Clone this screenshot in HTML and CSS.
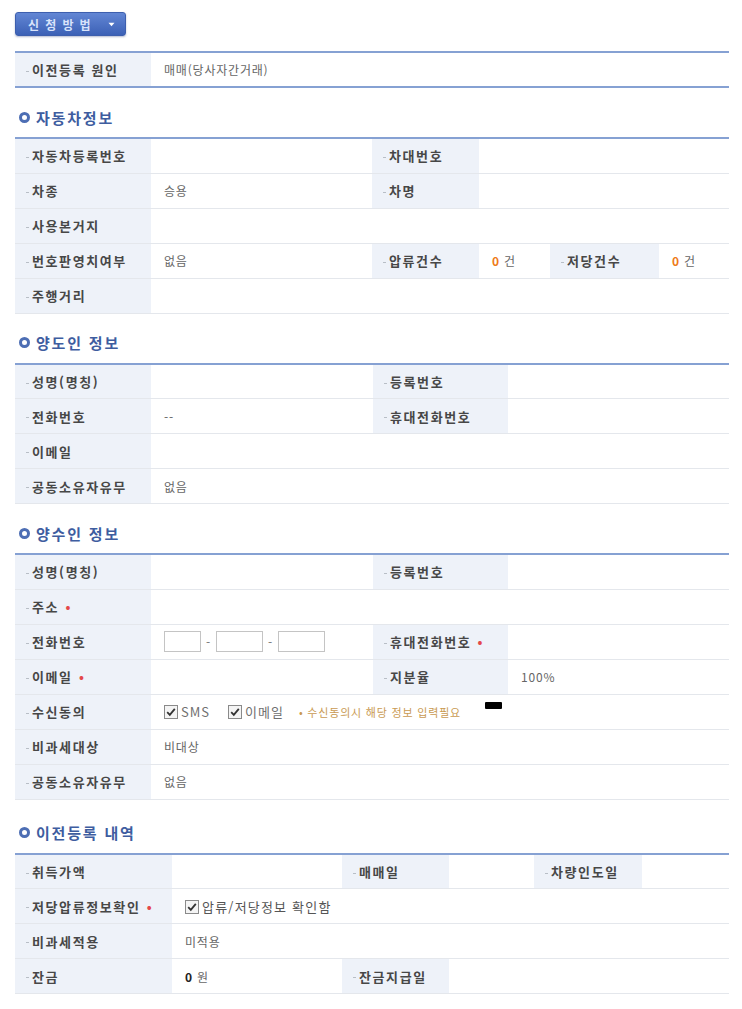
FILE: index.html
```html
<!DOCTYPE html>
<html lang="ko">
<head>
<meta charset="utf-8">
<link rel="stylesheet" href="styles.css">
</head>
<body>
<div class="page">
  <div class="topbar">
    <button class="btn-method"><span class="btn-text">신 청 방 법</span><svg class="btn-arrow" width="7" height="5" viewBox="0 0 7 5"><path d="M0.5 0.8 L3.5 4.2 L6.5 0.8 Z" fill="#ffffff"/></svg></button>
  </div>

  <table class="grid grid-cause">
    <colgroup><col class="w136"><col></colgroup>
    <tr><th>이전등록 원인</th><td>매매(당사자간거래)</td></tr>
  </table>

  <h2 class="sec-title"><span class="bullet"></span>자동차정보</h2>
  <table class="grid">
    <colgroup><col style="width:136px"><col style="width:221px"><col style="width:107px"><col style="width:71px"><col style="width:109px"><col style="width:70px"></colgroup>
    <tr><th>자동차등록번호</th><td></td><th>차대번호</th><td colspan="3"></td></tr>
    <tr><th>차종</th><td>승용</td><th>차명</th><td colspan="3"></td></tr>
    <tr><th>사용본거지</th><td colspan="5"></td></tr>
    <tr><th>번호판영치여부</th><td>없음</td><th>압류건수</th><td><b class="num">0</b> 건</td><th>저당건수</th><td><b class="num">0</b> 건</td></tr>
    <tr><th>주행거리</th><td colspan="5"></td></tr>
  </table>

  <h2 class="sec-title"><span class="bullet"></span>양도인 정보</h2>
  <table class="grid">
    <colgroup><col style="width:136px"><col style="width:222px"><col style="width:135px"><col style="width:221px"></colgroup>
    <tr><th>성명(명칭)</th><td></td><th>등록번호</th><td></td></tr>
    <tr><th>전화번호</th><td>--</td><th>휴대전화번호</th><td></td></tr>
    <tr><th>이메일</th><td colspan="3"></td></tr>
    <tr><th>공동소유자유무</th><td colspan="3">없음</td></tr>
  </table>

  <h2 class="sec-title"><span class="bullet"></span>양수인 정보</h2>
  <table class="grid grid-buyer">
    <colgroup><col style="width:136px"><col style="width:222px"><col style="width:135px"><col style="width:221px"></colgroup>
    <tr><th>성명(명칭)</th><td></td><th>등록번호</th><td></td></tr>
    <tr><th>주소 <span class="req">•</span></th><td colspan="3"></td></tr>
    <tr><th>전화번호</th><td class="phone"><span class="inp inp-s"></span><span class="dash">-</span><span class="inp inp-m"></span><span class="dash">-</span><span class="inp inp-m"></span></td><th>휴대전화번호 <span class="req">•</span></th><td></td></tr>
    <tr><th>이메일 <span class="req">•</span></th><td></td><th>지분율</th><td class="pct">100%</td></tr>
    <tr><th>수신동의</th><td colspan="3" class="consent-cell"><div class="consent">
      <span class="chk"><svg width="14" height="14" viewBox="0 0 14 14"><rect x="0.5" y="0.5" width="13" height="13" fill="#f4f4f4" stroke="#8a8a8a"/><path d="M3.2 7.2 L5.8 9.8 L10.8 3.8" fill="none" stroke="#333" stroke-width="1.8"/></svg></span><span class="chk-label">SMS</span>
      <span class="chk chk-2"><svg width="14" height="14" viewBox="0 0 14 14"><rect x="0.5" y="0.5" width="13" height="13" fill="#f4f4f4" stroke="#8a8a8a"/><path d="M3.2 7.2 L5.8 9.8 L10.8 3.8" fill="none" stroke="#333" stroke-width="1.8"/></svg></span><span class="chk-label">이메일</span>
      <span class="hint">• 수신동의시 해당 정보 입력필요</span>
      <span class="blackmark"></span>
    </div></td></tr>
    <tr><th>비과세대상</th><td colspan="3">비대상</td></tr>
    <tr><th>공동소유자유무</th><td colspan="3">없음</td></tr>
  </table>

  <h2 class="sec-title sec-last"><span class="bullet"></span>이전등록 내역</h2>
  <table class="grid grid-wide">
    <colgroup><col style="width:157px"><col style="width:170px"><col style="width:107px"><col style="width:85px"><col style="width:108px"><col style="width:87px"></colgroup>
    <tr><th>취득가액</th><td></td><th>매매일</th><td></td><th>차량인도일</th><td></td></tr>
    <tr><th>저당압류정보확인 <span class="req">•</span></th><td colspan="5" class="confirm"><span class="chk"><svg width="14" height="14" viewBox="0 0 14 14"><rect x="0.5" y="0.5" width="13" height="13" fill="#f4f4f4" stroke="#8a8a8a"/><path d="M3.2 7.2 L5.8 9.8 L10.8 3.8" fill="none" stroke="#333" stroke-width="1.8"/></svg></span><span class="chk-label">압류/저당정보 확인함</span></td></tr>
    <tr><th>비과세적용</th><td colspan="5">미적용</td></tr>
    <tr><th>잔금</th><td><b class="won">0</b> 원</td><th>잔금지급일</th><td colspan="3"></td></tr>
  </table>
</div>
</body>
</html>
```

FILE: styles.css
```css
* { box-sizing: border-box; }
html, body { margin: 0; padding: 0; background: #ffffff; }
body {
  font-family: "Noto Sans CJK KR", "Noto Sans", "Liberation Sans", sans-serif;
  font-size: 12px;
  color: #666666;
}
.page { padding: 12px 13px 0 15px; width: 742px; }

.topbar { height: 24px; margin-bottom: 15px; }
.btn-method {
  display: flex;
  align-items: center;
  width: 111px;
  height: 24px;
  padding: 0 0 0 12px;
  border: 1px solid #3d5fae;
  border-radius: 3px;
  background: linear-gradient(#6286d4, #3c61b6);
  box-shadow: 0 1px 2px rgba(40, 60, 120, 0.35);
  font-family: "Noto Sans CJK KR", sans-serif;
  font-size: 12px;
  font-weight: 700;
  color: #d9e4fb;
  letter-spacing: 1.4px;
  cursor: pointer;
}
.btn-text { white-space: pre; }
.btn-arrow { margin-left: 16px; }

.grid {
  width: 714px;
  table-layout: fixed;
  border-collapse: collapse;
  border-top: 2px solid #86a1d3;
}
.w136 { width: 136px; }
.grid th, .grid td {
  height: 35px;
  padding: 0;
  border-bottom: 1px solid #e4e7ec;
  vertical-align: middle;
  text-align: left;
  white-space: nowrap;
}
.grid th {
  background: #eef2f9;
  color: #474747;
  font-weight: 700;
  font-size: 13px;
  letter-spacing: 1.6px;
  padding-left: 11px;
}
.grid th::before {
  content: "";
  display: inline-block;
  width: 3px;
  height: 1px;
  background: #b8bec6;
  vertical-align: middle;
  margin-right: 3px;
}
.grid td { padding-left: 13px; color: #666666; letter-spacing: 0.8px; }
.grid-cause { border-bottom: 2px solid #86a1d3; }
.grid-cause th, .grid-cause td { height: 35px; border-bottom: 0; }

.req { color: #e4484a; font-weight: 700; margin-left: 1px; letter-spacing: 0; }
.num { color: #ee7a18; font-weight: 700; }
.won { color: #222222; font-weight: 700; }

.sec-title {
  display: flex;
  align-items: center;
  height: 20px;
  margin: 19px 0 10px 0;
  padding-left: 4px;
  font-size: 15px;
  font-weight: 700;
  color: #3e5d9f;
  letter-spacing: 1.8px;
}
.sec-last { margin-top: 23px; }
.bullet {
  width: 11px;
  height: 11px;
  border: 3px solid #4d6eb4;
  border-radius: 50%;
  margin-right: 6px;
}

.phone { font-size: 0; padding-left: 12px; }
.inp {
  display: inline-block;
  height: 21px;
  border: 1px solid #c4c4c4;
  background: #ffffff;
  vertical-align: middle;
}
.inp-s { width: 37px; }
.inp-m { width: 47px; }
.dash {
  display: inline-block;
  width: 15px;
  text-align: center;
  font-size: 12px;
  color: #777777;
  vertical-align: middle;
}

.consent-cell { padding-left: 15px; }
.consent { display: flex; align-items: center; height: 34px; }
.chk { display: inline-flex; width: 14px; height: 14px; }
.chk-2 { margin-left: 18px; }
.chk-label { margin-left: 3px; color: #707070; font-size: 13px; letter-spacing: 1px; }
.hint { margin-left: 15px; font-size: 11px; color: #c99a52; letter-spacing: 0.8px; }
.blackmark {
  align-self: flex-start;
  margin-top: 7px;
  margin-left: 24px;
  width: 17px;
  height: 7px;
  background: #000000;
  border-radius: 1px;
}
.confirm { padding-left: 16px; }
.confirm .chk, .confirm .chk-label { vertical-align: middle; }
.confirm .chk-label { color: #555555; letter-spacing: 1.2px; }
.pct { color: #777777; }
```
